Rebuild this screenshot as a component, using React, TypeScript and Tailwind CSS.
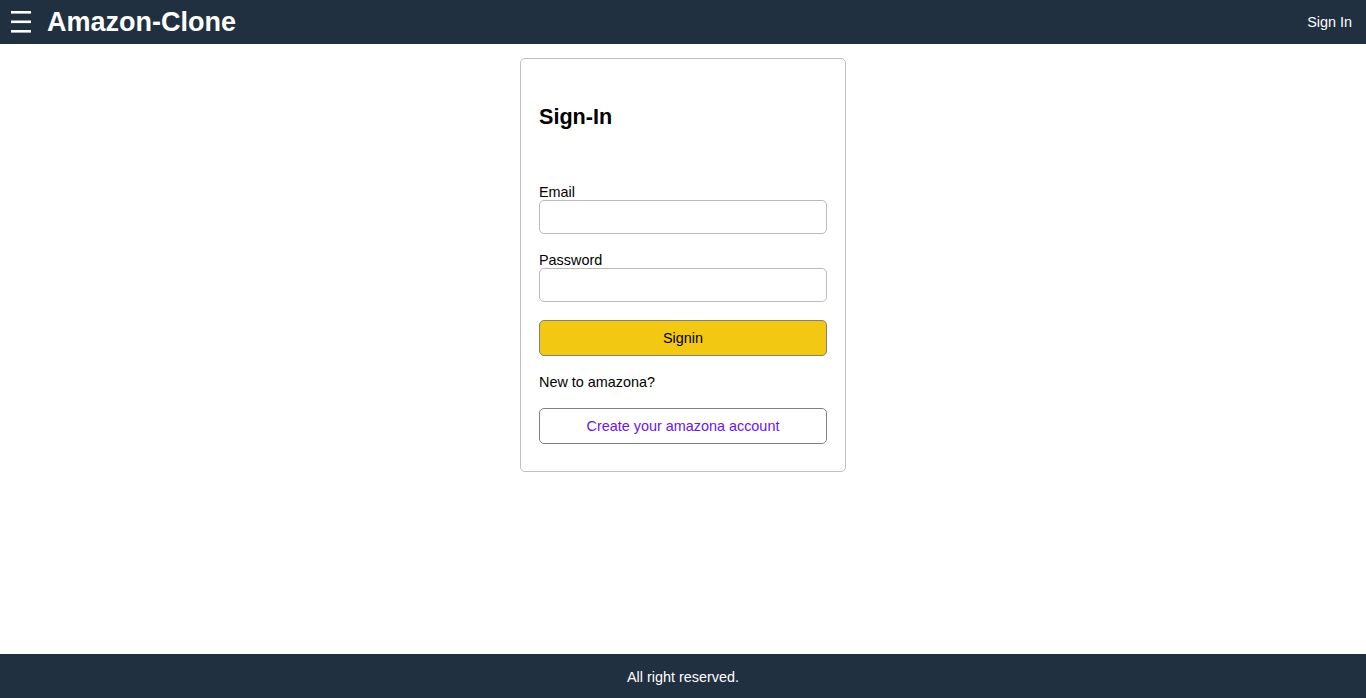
import React from "react";

export default function App() {
  const font = { fontFamily: '"Liberation Sans", Arial, Helvetica, sans-serif' };
  return (
    <div className="flex h-[698px] flex-col bg-white text-black" style={font}>
      <header className="flex h-[44px] items-center justify-between bg-[#203040] text-white">
        <div className="flex items-center">
          <svg className="ml-[10px]" width="22" height="22" viewBox="0 0 22 22" fill="none">
            <rect x="1" y="0" width="20" height="2.6" fill="#fff" />
            <rect x="1" y="9.5" width="20" height="2.6" fill="#fff" />
            <rect x="1" y="19" width="20" height="2.6" fill="#fff" />
          </svg>
          <span className="ml-[15px] text-[27px] font-bold leading-none">Amazon-Clone</span>
        </div>
        <a className="mr-[14px] mt-[2px] text-[14.4px] text-white">Sign In</a>
      </header>
      <main className="flex flex-1 justify-center">
        <div className="mt-[14px] h-fit w-[326px] rounded-[5px] border border-[#c0c0c0] px-[18px] pb-[27px] pt-[45px]">
          <h1 className="h-[26px] text-[21.6px] font-bold leading-[26px]">Sign-In</h1>
          <label className="mt-[53px] block h-[17px] pt-[1px] text-[14.4px] leading-[17px]">Email</label>
          <input className="block h-[34px] w-full rounded-[5px] border border-[#bbbbbb]" />
          <label className="mt-[17px] block h-[17px] pt-[1px] text-[14.4px] leading-[17px]">Password</label>
          <input type="password" className="block h-[34px] w-full rounded-[5px] border border-[#bbbbbb]" />
          <button className="mt-[18px] block h-[36px] w-full rounded-[5px] border border-[#808080] bg-[#f2c812] pt-[2px] text-[14.4px] text-black">
            Signin
          </button>
          <div className="mt-[18px] h-[17px] text-[14.4px] leading-[17px]">New to amazona?</div>
          <button className="mt-[17px] block h-[36px] w-full rounded-[5px] border border-[#808080] bg-white pt-[2px] text-[14.4px] text-[#6a14f0]">
            Create your amazona account
          </button>
        </div>
      </main>
      <footer className="flex h-[44px] items-center justify-center bg-[#203040] pt-[4px] text-[14.4px] text-white">
        All right reserved.
      </footer>
    </div>
  );
}
